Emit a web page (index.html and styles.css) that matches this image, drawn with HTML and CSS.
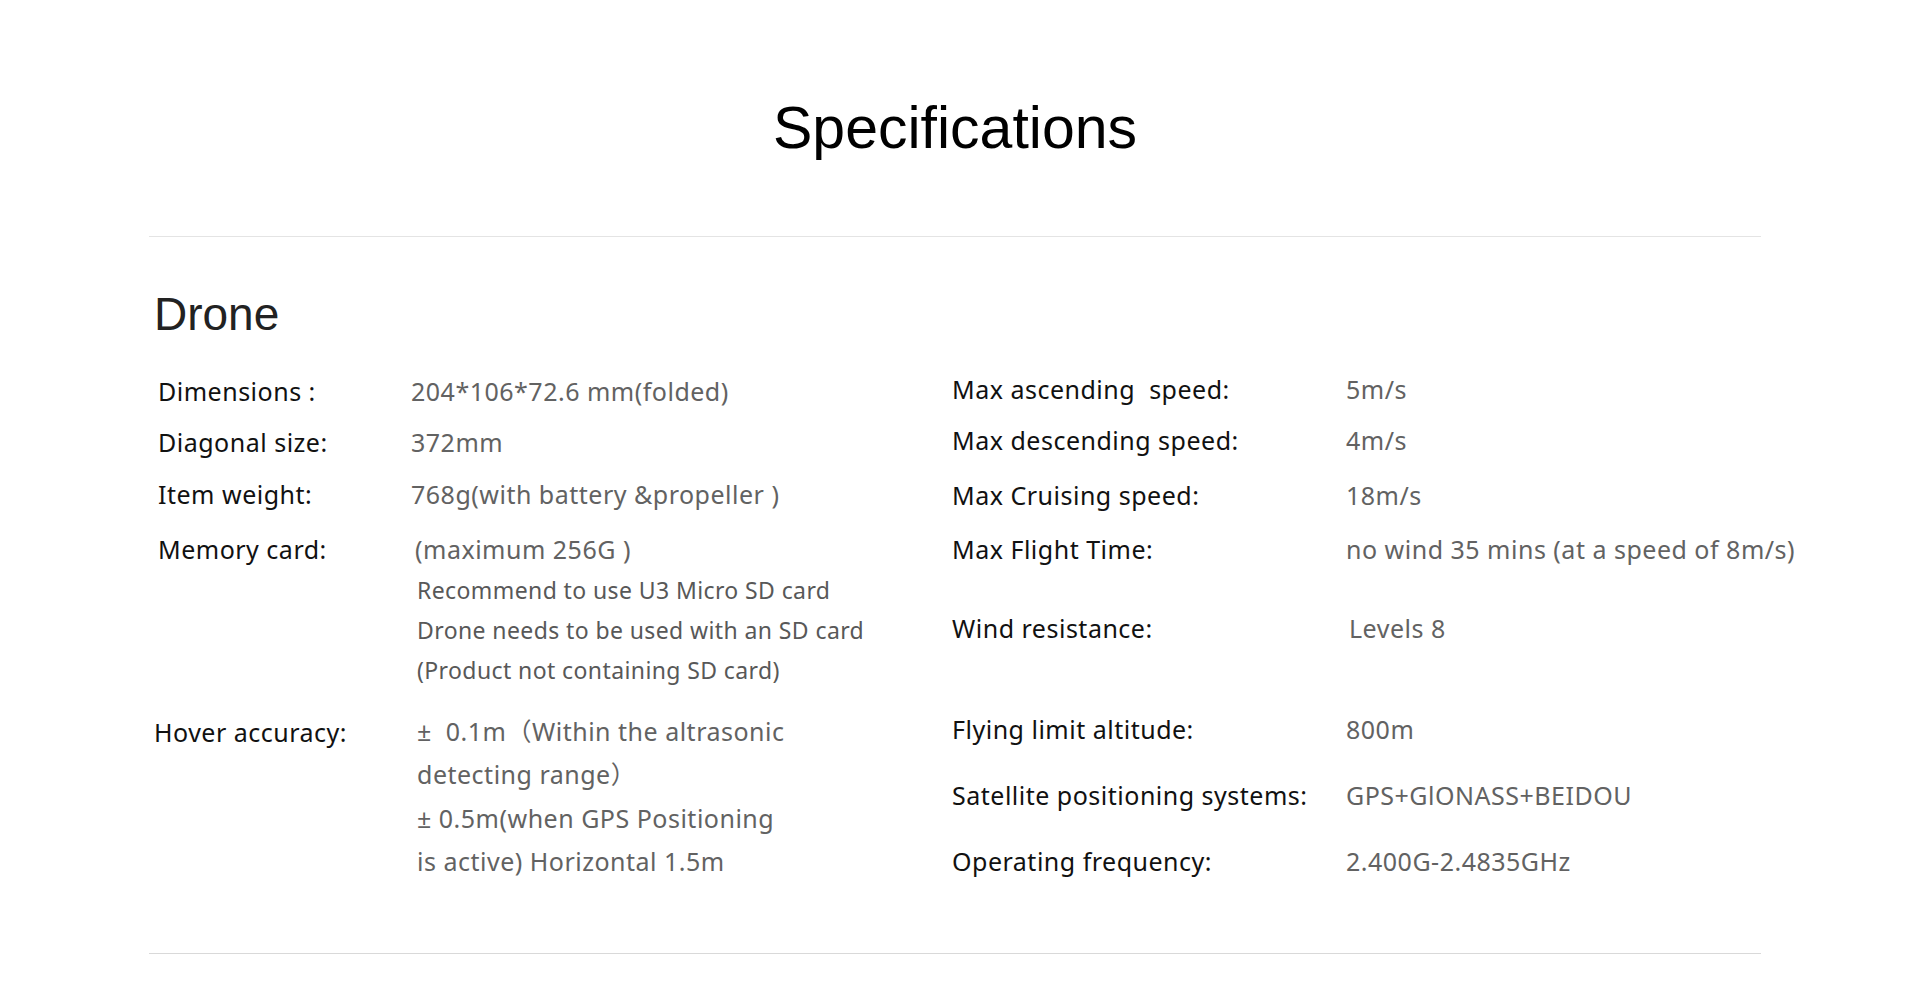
FILE: index.html
```html
<!DOCTYPE html>
<html lang="en">
<head>
<meta charset="utf-8">
<title>Specifications</title>
<link rel="stylesheet" href="styles.css">
</head>
<body>
<main class="page">
  <h1 class="title">Specifications</h1>
  <hr class="divider">
  <section class="group">
    <h2 class="group-title">Drone</h2>
    <div class="specs">
      <div class="col col-left">
        <div class="row r1"><span class="label">Dimensions :</span><span class="value">204*106*72.6 mm(folded)</span></div>
        <div class="row r2"><span class="label">Diagonal size:</span><span class="value">372mm</span></div>
        <div class="row r3"><span class="label">Item weight:</span><span class="value">768g(with battery &amp;propeller )</span></div>
        <div class="row r4">
          <span class="label">Memory card:</span>
          <div class="value">
            <div class="first">(maximum 256G )</div>
            <div class="sub">
              <div>Recommend to use U3 Micro SD card</div>
              <div>Drone needs to be used with an SD card</div>
              <div>(Product not containing SD card)</div>
            </div>
          </div>
        </div>
        <div class="row r5">
          <span class="label label-shift">Hover accuracy:</span>
          <div class="value multi">
            <div>±&nbsp; 0.1m（Within the altrasonic</div>
            <div>detecting range）</div>
            <div>± 0.5m(when GPS Positioning</div>
            <div>is active) Horizontal 1.5m</div>
          </div>
        </div>
      </div>
      <div class="col col-right">
        <div class="row q1"><span class="label">Max ascending&nbsp; speed:</span><span class="value">5m/s</span></div>
        <div class="row q2"><span class="label">Max descending speed:</span><span class="value">4m/s</span></div>
        <div class="row q3"><span class="label">Max Cruising speed:</span><span class="value">18m/s</span></div>
        <div class="row q4"><span class="label">Max Flight Time:</span><span class="value">no wind 35 mins (at a speed of 8m/s)</span></div>
        <div class="row q5"><span class="label">Wind resistance:</span><span class="value nudge">Levels 8</span></div>
        <div class="row q6"><span class="label">Flying limit altitude:</span><span class="value">800m</span></div>
        <div class="row q7"><span class="label">Satellite positioning systems:</span><span class="value">GPS+GlONASS+BEIDOU</span></div>
        <div class="row q8"><span class="label">Operating frequency:</span><span class="value">2.400G-2.4835GHz</span></div>
      </div>
    </div>
  </section>
  <hr class="divider divider-bottom">
</main>
</body>
</html>
```
FILE: styles.css
```css
html, body {
  margin: 0;
  padding: 0;
  background: #ffffff;
}

.page {
  width: 1612px;
  margin-left: 149px;
  padding-top: 95px;
}

.title {
  margin: 0;
  font-family: "Liberation Sans", Arial, sans-serif;
  font-weight: 400;
  font-size: 59px;
  line-height: 66px;
  color: #000;
  text-align: center;
}

.divider {
  margin: 75px 0 0;
  border: 0;
  height: 1px;
  background: #e4e4e4;
}

.divider-bottom {
  margin-top: 70px;
  background: #d9d9d9;
}

.group-title {
  margin: 51px 0 0 5px;
  font-family: "Liberation Sans", Arial, sans-serif;
  font-weight: 400;
  font-size: 46px;
  line-height: 52px;
  color: #222;
}

.specs {
  display: flex;
  margin-top: 32px;
  font-family: "Noto Sans", "Noto Sans CJK SC", sans-serif;
  font-size: 25px;
  line-height: 34px;
  letter-spacing: 0.5px;
  white-space: nowrap;
}

.col {
  flex: none;
  display: flex;
  flex-direction: column;
}

.col-left {
  width: 803px;
  padding-top: 2px;
}

.row {
  display: flex;
  align-items: flex-start;
}

.label {
  flex: none;
  color: #111;
}

.value {
  color: #626262;
}

.col-left .label {
  width: 253px;
  padding-left: 9px;
}

.col-right .label {
  width: 394px;
}

.label-shift {
  margin-left: -4px;
  padding-right: 4px;
}

.r2 { margin-top: 17px; }
.r3 { margin-top: 18px; }
.r4 { margin-top: 21px; }
.r5 { margin-top: 25px; }

.first {
  padding-left: 4px;
}

.sub {
  margin-top: 4px;
  padding-left: 6px;
  font-size: 23px;
  line-height: 40px;
  letter-spacing: 0.4px;
  color: #585858;
}

.multi {
  padding-left: 6px;
  line-height: 43.3px;
  margin-top: -5px;
}

.q2 { margin-top: 17px; }
.q3 { margin-top: 21px; }
.q4 { margin-top: 20px; }
.q5 { margin-top: 45px; }
.q6 { margin-top: 67px; }
.q7 { margin-top: 32px; }
.q8 { margin-top: 32px; }

.nudge {
  padding-left: 3px;
}
```
